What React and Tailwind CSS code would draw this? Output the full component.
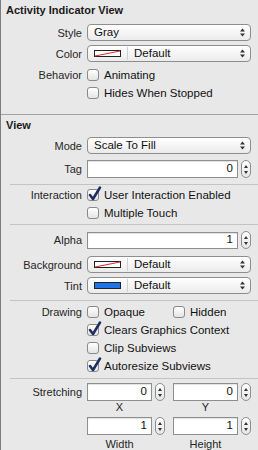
import React from 'react';

const font = { fontFamily: '"Liberation Sans", Arial, sans-serif' };

const Arrows = () => (
  <svg width="5" height="9" viewBox="0 0 5 9" className="shrink-0">
    <path d="M2.5 0.5 L5 3.5 L0 3.5 Z" fill="#333" />
    <path d="M0 5.5 L5 5.5 L2.5 8.5 Z" fill="#333" />
  </svg>
);

const Swatch = ({ tint }) =>
  tint ? (
    <div className="w-[27px] h-[7px] border border-[#222] bg-[#1f74ea]" />
  ) : (
    <svg width="27" height="7" viewBox="0 0 27 7">
      <rect x="0.5" y="0.5" width="26" height="6" fill="#fff" stroke="#222" />
      <line x1="1" y1="6" x2="26" y2="1" stroke="#e0282a" strokeWidth="1" />
    </svg>
  );

const Popup = ({ children, swatch, tint }) => (
  <div className="h-[17px] flex items-center rounded-[4px] border border-[#8e8e8e] bg-linear-to-b from-white to-[#ebebeb] pl-[6px] pr-[5px] text-[11.5px] text-[#111]">
    {swatch && (
      <>
        <Swatch tint={tint} />
        <div className="w-px h-[13px] bg-[#d0d0d0] ml-[6px] mr-[6px]" />
      </>
    )}
    <span className="flex-1 leading-none">{children}</span>
    <Arrows />
  </div>
);

const Stepper = () => (
  <div className="w-[10px] h-[18px] shrink-0 rounded-full border border-[#8e8e8e] bg-linear-to-b from-white to-[#e6e6e6] flex flex-col items-center justify-center gap-[3px]">
    <svg width="4" height="3" viewBox="0 0 4 3"><path d="M2 0 L4 3 L0 3 Z" fill="#333" /></svg>
    <svg width="4" height="3" viewBox="0 0 4 3"><path d="M0 0 L4 0 L2 3 Z" fill="#333" /></svg>
  </div>
);

const Field = ({ value, h = 'h-[18px]' }) => (
  <div className="flex items-center gap-[3px] w-full">
    <div className={`${h} flex-1 bg-white border border-[#8e8e8e] shadow-[inset_0_1px_1px_rgba(0,0,0,0.12)] flex items-center justify-end pr-[4px] text-[11.5px] text-[#111]`}>
      {value}
    </div>
    <Stepper />
  </div>
);

const Check = ({ checked, label }) => (
  <div className="flex items-center h-[18px]">
    <div className="relative w-[12px] h-[12px] rounded-[3px] border border-[#8a8a8a] bg-linear-to-b from-white to-[#e4e4e4] shrink-0">
      {checked && (
        <svg width="14" height="15" viewBox="0 0 14 15" className="absolute left-[0px] top-[-4px]">
          <path d="M2 9 L5 13 L12 1.5" fill="none" stroke="#1d2e5e" strokeWidth="2.5" strokeLinecap="round" strokeLinejoin="round" />
        </svg>
      )}
    </div>
    <span className="ml-[5px] text-[11.5px] leading-[14px] text-[#111] whitespace-nowrap">{label}</span>
  </div>
);

const Row = ({ label, children, className = '' }) => (
  <div className={`flex items-center ${className}`}>
    <div className="w-[81px] shrink-0 text-right text-[11px] leading-[14px] text-[#262626] whitespace-nowrap">{label}</div>
    <div className="ml-[5px] w-[164px]">{children}</div>
  </div>
);

const Divider = () => <div className="ml-[9px] h-px bg-[#c3c3c3]" />;

export default function App() {
  return (
    <div className="w-[258px] h-[450px] overflow-hidden bg-[#e8e8e8] border-l border-[#7d7d7d] select-none" style={font}>
      {/* Activity Indicator View */}
      <div className="h-[20px] flex items-center pl-[5px] text-[11px] font-bold text-[#1a1a1a]">Activity Indicator View</div>
      <Row label="Style" className="mt-[4px]">
        <Popup>Gray</Popup>
      </Row>
      <Row label="Color" className="mt-[4px]">
        <Popup swatch>Default</Popup>
      </Row>
      <Row label="Behavior" className="mt-[4px]">
        <Check label="Animating" />
      </Row>
      <Row label="">
        <Check label="Hides When Stopped" />
      </Row>

      <div className="mt-[12px] h-px bg-[#a3a3a3]" />

      {/* View */}
      <div className="h-[20px] flex items-center pl-[5px] text-[11px] font-bold text-[#1a1a1a]">View</div>
      <Row label="Mode" className="mt-[2px]">
        <Popup>Scale To Fill</Popup>
      </Row>
      <Row label="Tag" className="mt-[6px]">
        <Field value="0" />
      </Row>
      <div className="mt-[6px]"><Divider /></div>
      <Row label="Interaction" className="mt-[1px]">
        <Check checked label="User Interaction Enabled" />
      </Row>
      <Row label="">
        <Check label="Multiple Touch" />
      </Row>
      <div className="mt-[2px]"><Divider /></div>
      <Row label="Alpha" className="mt-[6px]">
        <Field value="1" h="h-[17px]" />
      </Row>
      <Row label="Background" className="mt-[7px]">
        <Popup swatch>Default</Popup>
      </Row>
      <Row label="Tint" className="mt-[4px]">
        <Popup swatch tint>Default</Popup>
      </Row>
      <div className="mt-[6px]"><Divider /></div>
      <Row label="Drawing" className="mt-[2px]">
        <div className="grid grid-cols-2 gap-[8px]">
          <Check label="Opaque" />
          <Check label="Hidden" />
        </div>
      </Row>
      <Row label="">
        <Check checked label="Clears Graphics Context" />
      </Row>
      <Row label="">
        <Check label="Clip Subviews" />
      </Row>
      <Row label="">
        <Check checked label="Autoresize Subviews" />
      </Row>
      <div className="mt-[3px]"><Divider /></div>
      <Row label="Stretching" className="mt-[4px]">
        <div className="grid grid-cols-2 gap-[8px]">
          <Field value="0" />
          <Field value="0" />
        </div>
      </Row>
      <Row label="">
        <div className="grid grid-cols-2 gap-[8px] text-[11px] text-[#262626] leading-[12px]">
          <div className="text-center pr-[13px]">X</div>
          <div className="text-center pr-[13px]">Y</div>
        </div>
      </Row>
      <Row label="" className="mt-[4px]">
        <div className="grid grid-cols-2 gap-[8px]">
          <Field value="1" />
          <Field value="1" />
        </div>
      </Row>
      <Row label="">
        <div className="grid grid-cols-2 gap-[8px] text-[11px] text-[#262626] leading-[12px] pt-[3px]">
          <div className="text-center pr-[13px]">Width</div>
          <div className="text-center pr-[13px]">Height</div>
        </div>
      </Row>
    </div>
  );
}
